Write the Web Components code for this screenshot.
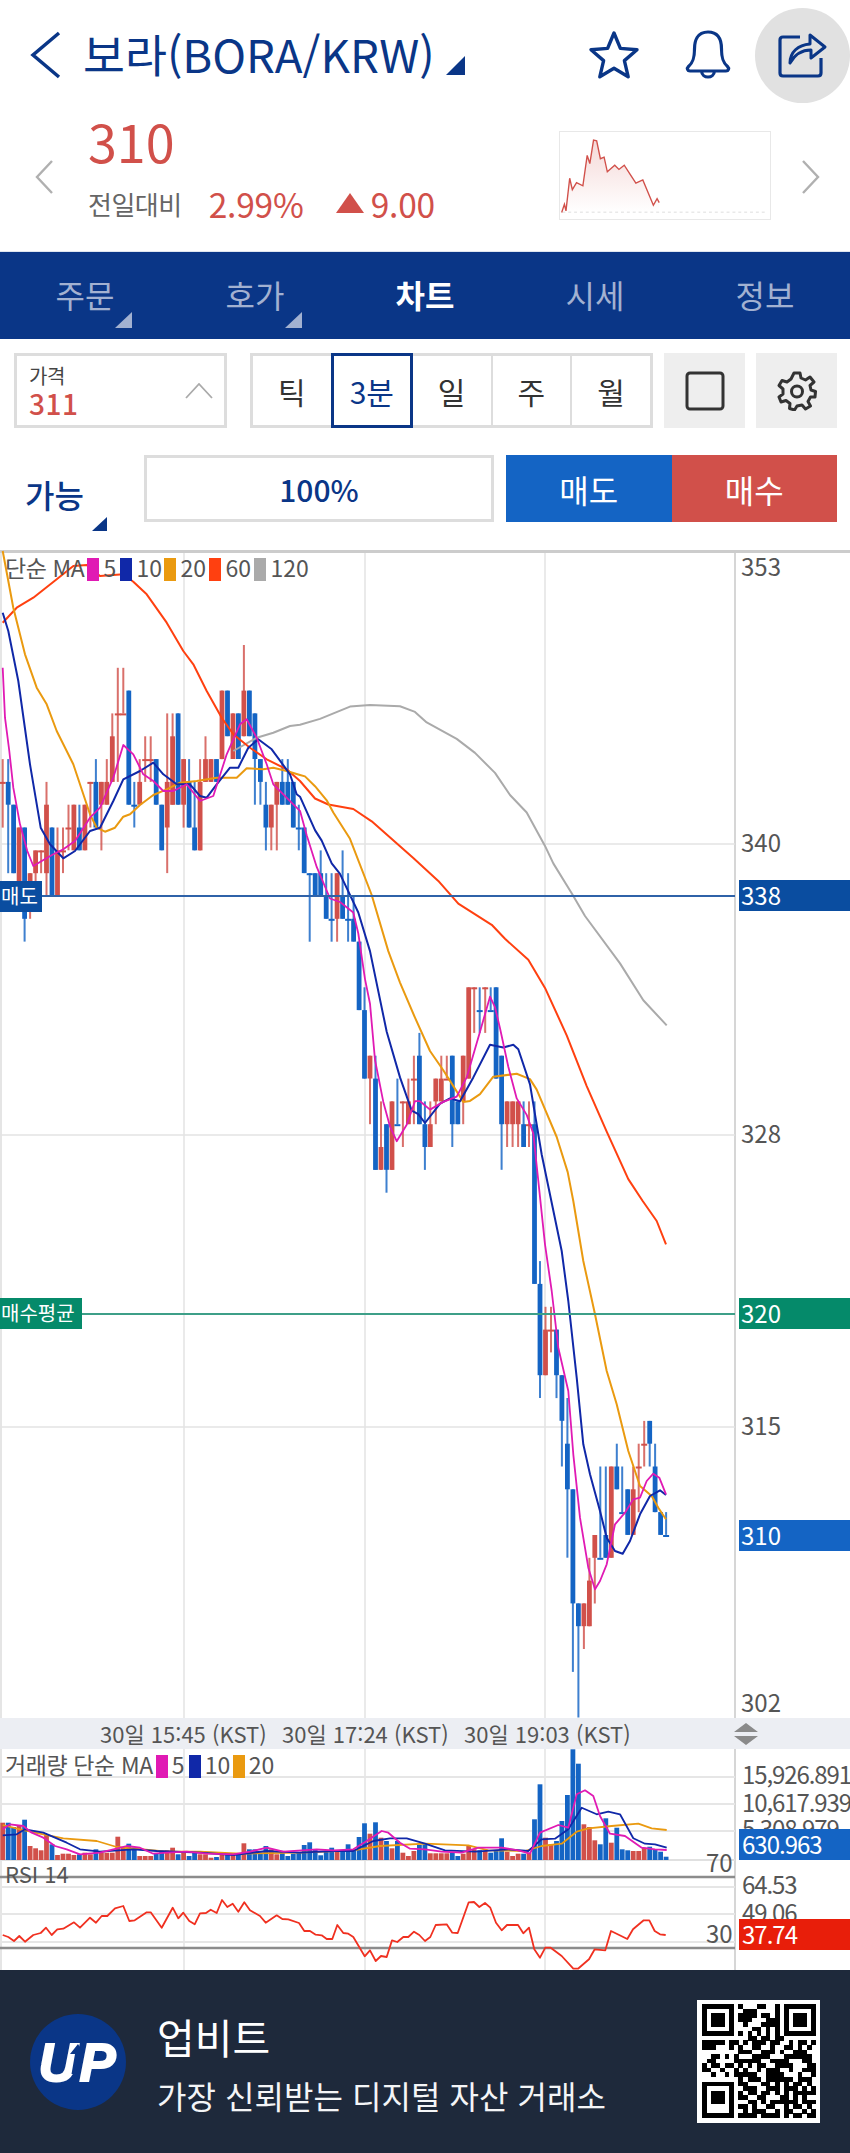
<!DOCTYPE html>
<html lang="ko">
<head>
<meta charset="utf-8">
<title>보라(BORA/KRW)</title>
<style>
	html, body { margin: 0; padding: 0; background: #fff; }
	body { width: 850px; height: 2153px; overflow: hidden; font-family: "Noto Sans CJK KR", "Noto Sans", sans-serif; }
	coin-page { display: block; }
</style>
</head>
<body>
<coin-page>
	<coin-header title-text="보라(BORA/KRW)"></coin-header>
	<price-summary></price-summary>
	<tab-bar></tab-bar>
	<chart-controls></chart-controls>
	<order-row></order-row>
	<main-chart></main-chart>
	<time-bar></time-bar>
	<lower-chart></lower-chart>
	<ad-banner></ad-banner>
</coin-page>

<script>
const NAVY = '#0a3687';
const BLUE = '#1464c4';
const RED = '#d1504a';
const MA_COLORS = { m5: '#e01ab4', m10: '#1028a8', m20: '#ea9a10', m60: '#ff4010', m120: '#aaaaaa' };

class CoinPage extends HTMLElement {
	constructor() {
		super();
		this.attachShadow({ mode: 'open' });
		this.shadowRoot.innerHTML = `
		<style>:host { display: flex; flex-direction: column; width: 850px; height: 2153px; color: #333; }</style>
		<slot></slot>`;
	}
}

class CoinHeader extends HTMLElement {
	constructor() {
		super();
		this.attachShadow({ mode: 'open' });
		this.shadowRoot.innerHTML = `
		<style>
			:host { display: flex; align-items: center; height: 110px; flex: none; padding-left: 30px; box-sizing: border-box; overflow: hidden; }
			.title { margin-left: 21px; font-size: 45.6px; line-height: 1; color: ${NAVY}; white-space: nowrap; position: relative; top: -1px; }
			.tri { width: 0; height: 0; margin: 21px 0 0 11px; border-left: 19px solid transparent; border-bottom: 19px solid ${NAVY}; }
			.icons { display: flex; align-items: center; margin-left: auto; }
			.star { margin-right: 45px; }
			.bell { margin-right: 24px; }
			.share { width: 95px; height: 95px; border-radius: 50%; background: #e1e1e1; display: flex; align-items: center; justify-content: center; }
		</style>
		<svg width="32" height="48" viewBox="0 0 32 48"><path d="M29 2 L3 24 L29 46" fill="none" stroke="${NAVY}" stroke-width="3.5"/></svg>
		<div class="title"></div>
		<div class="tri"></div>
		<div class="icons">
			<svg class="star" width="52" height="50" viewBox="0 0 52 50"><path d="M26 3 L32.4 18.4 L49 19.7 L36.4 30.6 L40.2 46.8 L26 38.2 L11.8 46.8 L15.6 30.6 L3 19.7 L19.6 18.4 Z" fill="none" stroke="${NAVY}" stroke-width="3.4" stroke-linejoin="round"/></svg>
			<svg class="bell" width="46" height="50" viewBox="0 0 46 50"><path d="M23 2 C12 2 9.5 11 9.5 19 C9.5 29 7.5 33 3.5 36.5 C1.5 38.5 2.5 41 5 41 L41 41 C43.5 41 44.5 38.5 42.5 36.5 C38.500 33 36.5 29 36.5 19 C36.5 11 34 2 23 2 Z M16.5 41 C17 49 29 49 29.500 41" fill="none" stroke="${NAVY}" stroke-width="3.2" stroke-linejoin="round"/></svg>
			<div class="share">
				<svg width="50" height="46" viewBox="0 0 50 46"><path d="M22 5 L5 5 Q2 5 2 8 L2 41 Q2 44 5 44 L40 44 Q43 44 43 41 L43 26" fill="none" stroke="${NAVY}" stroke-width="3.2"/><path d="M12 31 C12 20 20 13 32 12 L32 3 L47 15 L33 26 L33 18 C24 18 17 22 12 31 Z" fill="none" stroke="${NAVY}" stroke-width="3" stroke-linejoin="round"/></svg>
			</div>
		</div>`;
		this.shadowRoot.querySelector('.title').textContent = this.getAttribute('title-text');
	}
}

class PriceSummary extends HTMLElement {
	constructor() {
		super();
		this.attachShadow({ mode: 'open' });
		this.shadowRoot.innerHTML = `
		<style>
			:host { display: flex; align-items: flex-start; height: 142px; flex: none; box-sizing: border-box; padding: 0 30px 0 35px; border-bottom: 1px solid #dfe6ef; }
			.nav { margin-top: 50px; flex: none; }
			.info { margin-left: 35px; width: 472px; }
			.price { font-size: 52px; line-height: 52px; margin-top: 5px; color: ${RED}; }
			.diff { display: flex; align-items: center; margin-top: 17px; height: 38px; color: ${RED}; font-size: 33.5px; letter-spacing: -.2px; white-space: nowrap; }
			.label { color: #666; font-size: 26px; margin-right: 27px; letter-spacing: -.5px; }
			.up { width: 0; height: 0; border-left: 14px solid transparent; border-right: 14px solid transparent; border-bottom: 20px solid ${RED}; margin: 0 7px 0 32px; }
			.spark { width: 212px; height: 89px; margin-top: 21px; flex: none; box-sizing: border-box; border: 1px solid #e8e8e8; display: block; }
			.next { margin-left: 31px; }
		</style>
		<svg class="nav" width="18" height="34" viewBox="0 0 18 34"><path d="M17 1 L2 17 L17 33" fill="none" stroke="#b0b0b0" stroke-width="2.4"/></svg>
		<div class="info">
			<div class="price">310</div>
			<div class="diff"><span class="label">전일대비</span><span>2.99%</span><span class="up"></span><span>9.00</span></div>
		</div>
		<svg class="spark" viewBox="559 131 212 89">
			<defs><linearGradient id="sg" x1="0" y1="0" x2="0" y2="1"><stop offset="0" stop-color="${RED}" stop-opacity=".22"/><stop offset="1" stop-color="${RED}" stop-opacity="0"/></linearGradient></defs>
			<path id="sa" fill="url(#sg)"/>
			<line x1="560" x2="770" y1="213" y2="213" stroke="#ddd" stroke-dasharray="3 3"/>
			<path id="sl" fill="none" stroke="${RED}" stroke-width="1.4"/>
		</svg>
		<svg class="nav next" width="18" height="34" viewBox="0 0 18 34"><path d="M1 1 L16 17 L1 33" fill="none" stroke="#b0b0b0" stroke-width="2.4"/></svg>`;
		const raw = [[1032, 640], [1037, 615], [1040, 635], [1047, 535], [1052, 570], [1060, 548], [1072, 558], [1080, 465], [1085, 490], [1092, 418], [1098, 420], [1105, 475], [1112, 470], [1118, 515], [1132, 495], [1140, 508], [1150, 495], [1160, 520], [1172, 550], [1185, 540], [1205, 618], [1212, 598], [1216, 610]];
		const pts = raw.map(p => [(p[0] / 1.845).toFixed(1), (p[1] / 3).toFixed(1)]);
		const line = 'M' + pts.map(p => p.join(' ')).join(' L');
		this.shadowRoot.getElementById('sl').setAttribute('d', line);
		this.shadowRoot.getElementById('sa').setAttribute('d', line + ` L${pts[pts.length - 1][0]} 213 L${pts[0][0]} 213 Z`);
	}
}

class TabBar extends HTMLElement {
	constructor() {
		super();
		this.attachShadow({ mode: 'open' });
		const tabs = [['주문', 1], ['호가', 1], ['차트', 0, 1], ['시세', 0], ['정보', 0]];
		this.shadowRoot.innerHTML = `
		<style>
			:host { display: grid; grid-template-columns: repeat(5, 1fr); height: 87px; flex: none; background: ${NAVY}; }
			.tab { position: relative; display: flex; align-items: center; justify-content: center; font-size: 32px; color: #a2b1d1; padding-bottom: 3px; box-sizing: border-box; }
			.on { color: #fff; font-weight: 700; }
			.tab i { position: absolute; left: 115px; top: 60px; width: 0; height: 0; border-left: 17px solid transparent; border-bottom: 16px solid #a2b1d1; }
		</style>
		${tabs.map(t => `<div class="tab ${t[2] ? 'on' : ''}">${t[0]}${t[1] ? '<i></i>' : ''}</div>`).join('')}`;
	}
}

class ChartControls extends HTMLElement {
	constructor() {
		super();
		this.attachShadow({ mode: 'open' });
		this.shadowRoot.innerHTML = `
		<style>
			:host { display: flex; height: 101px; flex: none; box-sizing: border-box; padding: 14px 13px 12px 14px; }
			.price { width: 213px; box-sizing: border-box; border: 3px solid #ddd; display: flex; align-items: center; justify-content: space-between; padding: 0 11px 0 12px; }
			.k { font-size: 20px; line-height: 24px; color: #444; letter-spacing: -.5px; }
			.v { font-size: 28px; line-height: 30px; color: ${RED}; font-weight: 500; letter-spacing: .5px; }
			.seg { display: flex; width: 403px; margin-left: 23px; box-sizing: border-box; border: 3px solid #ddd; }
			.seg div { flex: 1; display: flex; align-items: center; justify-content: center; font-size: 30px; color: #333; border-left: 2px solid #ddd; }
			.seg div:first-child { border-left: 0; }
			.seg .on { color: ${NAVY}; box-shadow: 0 0 0 3px ${NAVY} inset; margin: -3px 0; border-left: 0; flex: 0 0 82px; }
			.on + div { border-left: 0 !important; }
			.btn { width: 81px; background: #eee; margin-left: 11px; display: flex; align-items: center; justify-content: center; }
		</style>
		<div class="price">
			<div><div class="k">가격</div><div class="v">311</div></div>
			<svg width="28" height="16" viewBox="0 0 28 16"><path d="M1 15 L14 1 L27 15" fill="none" stroke="#aaa" stroke-width="1.8"/></svg>
		</div>
		<div class="seg"><div>틱</div><div class="on">3분</div><div>일</div><div>주</div><div>월</div></div>
		<div class="btn"><svg width="40" height="40" viewBox="0 0 40 40"><rect x="2" y="2" width="36" height="36" rx="3" fill="none" stroke="#333" stroke-width="3"/></svg></div>
		<div class="btn"><svg width="40" height="40" viewBox="0 0 40 40"><path d="M17 2 L23 2 L24 7 L28.500 9 L33 6 L37 11 L33 14.500 L34 19 L38.500 20.500 L38 26 L33.500 26 L31 30.500 L33.500 35 L28.500 38 L25 34 L20 35 L17.500 39 L12.500 37.500 L13 32.500 L9 29.500 L4 31 L2 26 L6 23 L6 18 L2 14.500 L5 9.500 L10 11 L14 8 Z" fill="none" stroke="#333" stroke-width="3" stroke-linejoin="round"/><circle cx="20" cy="20.500" r="5.500" fill="none" stroke="#333" stroke-width="3"/></svg></div>`;
	}
}

class OrderRow extends HTMLElement {
	constructor() {
		super();
		this.attachShadow({ mode: 'open' });
		this.shadowRoot.innerHTML = `
		<style>
			:host { display: flex; height: 110px; flex: none; box-sizing: border-box; padding: 15px 13px 28px 25px; color: ${NAVY}; }
			.able { width: 119px; position: relative; font-size: 32px; font-weight: 500; line-height: 78px; }
			.able i { position: absolute; left: 67px; top: 62px; width: 0; height: 0; border-left: 15px solid transparent; border-bottom: 14px solid ${NAVY}; }
			.pct { width: 350px; box-sizing: border-box; border: 3px solid #ddd; display: flex; align-items: center; justify-content: center; font-size: 30px; font-weight: 500; }
			.act { display: flex; align-items: center; justify-content: center; width: 165.500px; color: #fff; font-size: 32px; }
			.sell { margin-left: 12px; background: ${BLUE}; }
			.buy { background: ${RED}; }
		</style>
		<div class="able">가능<i></i></div>
		<div class="pct">100%</div>
		<div class="act sell">매도</div>
		<div class="act buy">매수</div>`;
	}
}

class ChartLegend extends HTMLElement {
	constructor() {
		super();
		this.attachShadow({ mode: 'open' });
		const items = this.getAttribute('items').split(',').map(s => s.split(':'));
		this.shadowRoot.innerHTML = `
		<style>
			:host { display: flex; align-items: center; font-size: 23px; line-height: 24px; color: #555; white-space: nowrap; height: 24px; }
			.n { margin-right: 3px; position: relative; top: -2px; letter-spacing: -.4px; }
			i { flex: none; width: 12px; height: 23px; }
			span { margin-left: 4px; position: relative; top: -2px; }
		</style>
		<div class="n">${this.getAttribute('label')}</div>
		${items.map(i => `<i style="background:${i[1]}"></i><span style="width:${i[2]}px">${i[0]}</span>`).join('')}`;
	}
}

// price to pixel, 1 tick = 22.82px, 338 sits on the sell line
const priceY = p => 895 + 22.82 * (338 - p);
const candleX = i => 2.67 + 5.483 * i;
const B = 1, R = 0;
// [colour, body top, body bottom, wick top, wick bottom]
const CANDLES = [
	[R,343,343,344,341],[B,343,342,344,339],[B,342,339,342,339],[R,341,338,341,338],[B,341,337,341,336],[R,339,338,339,337],[R,340,339,340,338],[R,340,340,340,339],
	[R,342,339,343,338],[B,341,338,341,338],[R,340,338,341,338],[R,340,340,341,339],[R,341,341,342,340],[R,342,340,342,340],[B,341,340,342,340],[R,342,340,342,340],
	[R,343,343,343,341],[B,343,341,344,341],[R,343,342,343,340],[R,343,342,344,342],[R,345,343,346,343],[R,346,346,348,343],[R,346,346,348,346],[B,347,342,347,342],
	[B,342,342,343,341],[R,343,342,344,342],[R,344,344,345,343],[R,344,344,345,343],[B,344,342,344,342],[B,342,340,342,340],[R,343,341,346,339],[R,345,342,346,342],
	[B,346,342,346,342],[R,344,342,344,341],[B,343,341,344,341],[B,341,340,343,340],[R,343,340,344,340],[R,344,343,345,343],[R,344,343,344,343],[B,344,343,344,343],
	[R,347,344,347,344],[B,347,345,347,345],[R,346,344,346,344],[B,346,344,346,344],[R,347,345,349,345],[B,347,345,347,345],[B,346,344,346,342],[B,344,343,344,342],
	[B,342,341,343,340],[R,342,341,342,340],[R,343,342,343,340],[B,343,342,344,342],[B,343,342,344,342],[B,343,341,343,341],[B,341,341,342,340],[B,341,339,341,339],
	[B,339,339,339,336],[B,339,338,339,338],[B,339,338,340,338],[B,338,337,339,337],[B,337,337,339,336],[R,339,337,339,336],[B,338,337,340,337],[B,337,337,339,336],
	[B,337,336,338,336],[B,336,333,336,333],[B,333,330,334,330],[R,331,330,331,328],[B,330,326,331,326],[R,327,326,329,326],[B,328,326,328,325],[R,329,326,329,326],
	[B,328,328,330,328],[R,329,329,329,327],[R,329,328,330,328],[R,330,330,331,328],[B,331,328,332,328],[B,328,327,329,326],[R,328,327,329,327],[R,330,329,330,328],
	[R,330,329,331,329],[R,330,330,331,330],[B,331,328,331,327],[B,329,328,329,328],[R,331,329,331,328],[R,334,330,334,330],[R,334,334,334,332],[B,333,333,334,332],
	[R,334,334,334,332],[B,333,333,334,333],[B,334,330,334,330],[B,331,328,331,326],[R,329,328,329,327],[R,329,328,329,327],[R,329,328,329,327],[B,328,327,329,327],
	[R,328,328,329,327],[B,328,321,329,321],[B,321,317,322,316],[R,319,317,320,317],[R,319,319,320,318],[B,319,317,319,316],[B,317,315,317,313],[B,314,312,316,309],
	[B,312,307,312,304],[B,307,306,307,302],[R,307,306,307,305],[R,308,306,309,306],[R,310,309,310,307],[B,309,309,313,309],[B,310,309,313,309],[R,313,309,313,309],
	[B,313,312,314,312],[B,311,311,313,311],[B,312,310,312,310],[R,312,310,313,310],[R,313,313,314,311],[R,314,314,315,313],[B,315,314,315,313],[B,313,311,314,311],
	[B,311,310,311,310],[B,310,310,311,310]
];

const z3 = a => a.map(p => [p[0] / 3, 550 + p[1] / 3]);
const z4 = a => a.map(p => [300 + p[0] / 3, 680 + p[1] / 2.851]);
const z5 = a => a.map(p => [500 + p[0] / 3, 1200 + p[1] / 3]);
const lowL = a => a.map(p => [p[0] / 3, 1700 + p[1] / 3]);
const lowR = a => a.map(p => [425 + p[0] / 3, 1700 + p[1] / 3]);
const polyline = (pts, color, w) => `<polyline fill="none" stroke="${color}" stroke-width="${w}" stroke-linejoin="round" points="${pts.map(p => p[0].toFixed(1) + ',' + p[1].toFixed(1)).join(' ')}"/>`;

const MA5 = [...z3([[8,350],[15,500],[28,600],[40,710],[60,820],[82,900],[100,945],[125,930],[160,910],[190,895],[225,870],[270,800],[300,770],[340,680],[370,582],[400,610],[430,670],[460,690],[490,720],[520,720],[560,700],[600,750],[640,735],[680,610],[720,520],[740,505],[770,560],[800,640],[820,700],[850,730],[880,760]]),
	...z4([[0,370],[20,440],[50,530],[90,620],[120,630],[160,660],[175,720],[195,850],[210,920],[225,1080],[250,1200],[270,1270],[290,1312],[320,1265],[345,1198],[360,1198],[390,1222],[430,1200],[470,1185],[500,1130],[540,1000],[570,900],[585,930],[600,990],[625,1100],[650,1190],[680,1237],[700,1290]]),
	...z5([[135,130],[155,270],[175,440],[205,570],[220,760],[240,950],[265,1100],[285,1165],[300,1140],[320,1090],[345,970],[375,935],[400,895],[420,890],[440,840],[460,818],[478,830],[498,880]])];
const MA10 = [...z3([[8,185],[25,240],[55,390],[90,640],[122,830],[150,880],[190,922],[225,900],[270,840],[300,830],[340,750],[370,685],[420,660],[460,635],[490,670],[530,700],[570,700],[600,735],[620,740],[650,700],[690,650],[715,650],[745,590],[775,565],[815,595],[870,670],[890,730]]),
	...z4([[0,330],[45,425],[65,455],[95,520],[120,550],[175,660],[210,770],[260,1000],[300,1130],[335,1225],[355,1235],[375,1260],[420,1205],[450,1190],[480,1198],[520,1130],[570,1037],[610,1045],[640,1037],[655,1050],[690,1150],[725,1350]]),
	...z5([[185,150],[205,300],[230,530],[250,730],[270,820],[300,930],[320,1010],[345,1050],[368,1058],[390,1020],[420,940],[450,885],[480,868],[498,882]])];
const MA20 = [...z3([[8,0],[40,170],[75,310],[110,410],[140,460],[170,540],[220,640],[270,790],[290,830],[315,842],[345,830],[370,797],[390,790],[420,762],[460,732],[500,715],[540,695],[590,690],[650,680],[710,680],[740,652],[790,655],[820,650],[860,660]]),
	...z4([[0,268],[15,272],[45,300],[80,340],[100,375],[150,450],[215,610],[265,770],[300,860],[345,960],[390,1055],[430,1110],[490,1200],[510,1197],[540,1178],[580,1128],[650,1120],[690,1135],[710,1165],[770,1300],[803,1400]]),
	...z5([[220,0],[250,180],[285,340],[320,510],[350,610],[385,750],[420,855],[455,885],[475,920],[498,955]])];
const MA60 = [...z3([[8,215],[50,170],[100,140],[170,85],[220,45],[260,42],[300,75],[370,70],[400,92],[440,130],[500,215],[550,300],[580,340],[620,420],[665,500],[700,550],[750,590],[800,625],[860,655]]),
	...z4([[0,285],[45,335],[85,352],[160,365],[215,400],[340,505],[415,570],[475,635],[575,695],[615,735],[685,795],[735,875],[800,1010],[860,1155],[920,1285],[985,1420]]),
	...z5([[428,0],[470,60],[498,130]])];
const MA120 = [...z3([[700,600],[770,560],[820,545],[870,525]]),
	...z4([[0,125],[60,108],[150,73],[210,68],[300,72],[345,88],[380,118],[470,165],[525,205],[585,262],[630,325],[680,375],[735,470],[760,520],[815,605],[855,670],[960,805],[1030,910],[1100,982]])];

class MainChart extends HTMLElement {
	constructor() {
		super();
		this.attachShadow({ mode: 'open' });
		const rects = CANDLES.map((c, i) => {
			const x = candleX(i);
			const col = c[0] ? BLUE : RED;
			const top = priceY(c[1]);
			const h = Math.max(priceY(c[2]) - top, 2);
			const doji = c[1] === c[2];
			return `<rect x="${(x - 1).toFixed(1)}" y="${priceY(c[3]).toFixed(1)}" width="2" height="${(priceY(c[4]) - priceY(c[3])).toFixed(1)}" fill="${col}" opacity=".82"/>` +
				`<rect x="${(x - (doji ? 3 : 2.4)).toFixed(1)}" y="${top.toFixed(1)}" width="${doji ? 6 : 4.8}" height="${h.toFixed(1)}" fill="${col}"/>`;
		}).join('');
		const grid = [184, 365, 545].map(x => `<line x1="${x}" x2="${x}" y1="552" y2="1717" stroke="#e3e3e3" stroke-width="1.500"/>`).join('') +
			[843, 1134, 1426].map(y => `<line x1="0" x2="735" y1="${y}" y2="${y}" stroke="#e3e3e3" stroke-width="1.500"/>`).join('');
		const axis = [['353', 565], ['340', 841], ['328', 1132], ['315', 1424], ['302', 1701]];
		this.shadowRoot.innerHTML = `
		<style>
			:host { display: block; position: relative; height: 1168px; flex: none; overflow: hidden; }
			svg { display: block; }
			.a { position: absolute; left: 741px; font-size: 24px; line-height: 30px; height: 30px; color: #555; }
			.tag { position: absolute; height: 31px; line-height: 29px; color: #fff; box-sizing: border-box; white-space: nowrap; }
			.l { left: 0; font-size: 20px; padding: 0 1px; }
			.r { left: 739px; width: 111px; font-size: 24px; padding-left: 2px; }
			chart-legend { position: absolute; left: 5px; top: 7px; }
		</style>
		<svg width="850" height="1168" viewBox="0 549 850 1168">
			<rect x="0" y="549" width="850" height="3" fill="#ccc"/>
			<line x1="1" x2="1" y1="552" y2="1717" stroke="#ddd" stroke-width="1.500"/>
			<line x1="735" x2="735" y1="552" y2="1717" stroke="#c8c8c8" stroke-width="1.500"/>
			${grid}
			${rects}
			${polyline(MA120, MA_COLORS.m120, 2)}
			${polyline(MA60, MA_COLORS.m60, 2)}
			${polyline(MA20, MA_COLORS.m20, 2)}
			${polyline(MA10, MA_COLORS.m10, 2)}
			${polyline(MA5, MA_COLORS.m5, 1.8)}
			<line x1="0" x2="735" y1="895" y2="895" stroke="#2f62a8" stroke-width="1.800"/>
			<line x1="0" x2="735" y1="1313" y2="1313" stroke="#3d9f88" stroke-width="1.800"/>
		</svg>
		<chart-legend label="단순 MA" items="5:${MA_COLORS.m5}:17,10:${MA_COLORS.m10}:28,20:${MA_COLORS.m20}:29,60:${MA_COLORS.m60}:29,120:${MA_COLORS.m120}:40"></chart-legend>
		${axis.map(a => `<div class="a" style="top:${a[1] - 549 - 15}px">${a[0]}</div>`).join('')}
		<div class="tag l" style="top:${880 - 549}px;background:#0a4da0;width:42px">매도</div>
		<div class="tag r" style="top:${879 - 549}px;background:#0a4da0">338</div>
		<div class="tag l" style="top:${1297 - 549}px;background:#058a6a;width:82px">매수평균</div>
		<div class="tag r" style="top:${1297 - 549}px;background:#058a6a">320</div>
		<div class="tag r" style="top:${1519 - 549}px;background:${BLUE}">310</div>`;
	}
}

class TimeBar extends HTMLElement {
	constructor() {
		super();
		this.attachShadow({ mode: 'open' });
		this.shadowRoot.innerHTML = `
		<style>
			:host { display: flex; align-items: center; height: 31px; flex: none; background: #eceef3; padding-left: 100px; box-sizing: border-box; font-size: 22px; color: #555; white-space: nowrap; }
			span { width: 182px; position: relative; top: -1px; }
			svg { margin-left: 103px; }
		</style>
		<span>30일 15:45 (KST)</span><span>30일 17:24 (KST)</span><span style="width:auto">30일 19:03 (KST)</span>
		<svg width="24" height="24" viewBox="0 0 24 24"><path d="M12 1 L24 10 L0 10 Z M0 14 L24 14 L12 23 Z" fill="#8a8a8a"/></svg>`;
	}
}

const VOL_TOPS = [365,365,378,372,356,435,442,448,400,430,462,458,458,462,460,455,460,445,455,455,455,407,440,428,440,465,465,465,458,452,448,440,460,455,465,450,460,460,470,468,462,460,462,462,427,445,445,455,435,445,460,455,465,458,455,432,424,445,463,450,440,450,450,430,445,408,367,398,364,410,420,442,420,455,465,450,432,430,
	457,457,457,457,455,465,458,432,445,448,450,455,450,412,452,465,458,458,455,355,250,410,430,420,360,282,145,188,370,378,418,430,352,425,380,445,448,450,450,440,437,445,452,467];
const VOL5 = [...lowL([[8,385],[30,370],[70,375],[95,395],[130,410],[165,435],[200,445],[240,460],[300,455],[340,445],[380,435],[420,440],[460,458],[500,455],[560,452],[620,458],[700,460],[750,452],[800,440],[850,452],[950,445],[1000,448],[1060,445],[1100,420],[1145,390],[1165,395],[1200,425],[1230,443],[1275,445]]),
	...lowR([[50,452],[110,455],[160,440],[230,440],[280,448],[315,458],[345,395],[400,372],[430,380],[455,280],[480,268],[505,285],[525,345],[555,398],[600,405],[650,440],[690,445],[725,447]])];
const VOL10 = [...lowL([[8,403],[50,400],[75,385],[130,395],[200,425],[240,445],[300,452],[400,445],[470,450],[600,455],[700,462],[800,450],[900,455],[1000,450],[1060,450],[1120,420],[1170,412],[1220,412],[1275,428]]),
	...lowR([[60,448],[150,452],[250,445],[310,450],[350,415],[390,413],[430,385],[470,320],[515,340],[550,332],[585,340],[625,412],[660,428],[690,430],[725,440]])];
const VOL20 = [...lowL([[8,372],[60,385],[130,400],[190,412],[290,420],[350,438],[430,445],[500,452],[600,452],[720,458],[900,455],[1060,448],[1140,435],[1275,428]]),
	...lowR([[130,433],[190,448],[300,450],[350,435],[410,428],[455,392],[490,382],[560,375],[640,368],[680,382],[725,387]])];
const RSI = [...lowL([[8,702],[25,708],[42,720],[58,705],[75,722],[100,702],[122,696],[138,680],[155,702],[172,685],[190,683],[222,664],[240,680],[270,650],[288,665],[305,645],[322,645],[345,622],[370,615],[388,660],[404,658],[440,634],[452,634],[485,680],[518,620],[535,652],[550,635],[568,660],[584,670],[600,637],[618,636],[632,626],[650,636],[666,597],[682,618],[698,608],[715,632],[733,604],[750,628],[780,645],[797,665],[830,643],[847,654],[865,655],[897,666],[913,690],[930,690],[947,701],[965,703],[980,714],[997,714],[1012,672],[1030,696],[1045,698],[1060,708],[1094,766],[1110,748],[1127,780],[1143,765],[1160,768],[1176,718],[1192,723],[1210,708],[1225,708],[1242,692],[1258,702],[1275,720]]),
	...lowR([[16,708],[32,672],[65,670],[82,695],[98,696],[131,604],[147,603],[163,618],[180,606],[196,620],[213,665],[230,688],[246,672],[279,672],[295,697],[312,680],[328,745],[345,770],[361,740],[377,740],[410,765],[445,803],[459,803],[492,775],[509,745],[541,748],[558,690],[607,714],[624,685],[656,658],[673,658],[689,690],[705,700],[722,702]])];

class LowerChart extends HTMLElement {
	constructor() {
		super();
		this.attachShadow({ mode: 'open' });
		const bars = VOL_TOPS.map((t, i) => {
			const top = 1700 + t / 3;
			return `<rect x="${(candleX(i) - 2.4).toFixed(1)}" y="${top.toFixed(1)}" width="4.800" height="${(1859 - top).toFixed(1)}" fill="${CANDLES[i][0] ? BLUE : RED}"/>`;
		}).join('');
		const h = (y, c, w) => `<line x1="0" x2="735" y1="${y}" y2="${y}" stroke="${c}" stroke-width="${w}"/>`;
		const labels = [['15,926.891', 1773], ['10,617.939', 1801], ['5,308.979', 1827], ['64.53', 1883], ['49.06', 1911]];
		this.shadowRoot.innerHTML = `
		<style>
			:host { display: block; position: relative; height: 221px; flex: none; overflow: hidden; }
			svg { display: block; }
			.a { position: absolute; left: 742px; font-size: 24px; line-height: 30px; color: #555; white-space: nowrap; letter-spacing: -1.1px; }
			.n { position: absolute; left: 706px; font-size: 24px; line-height: 30px; color: #555; }
			.tag { position: absolute; left: 739px; width: 111px; height: 31px; line-height: 29px; font-size: 24px; color: #fff; padding-left: 3px; box-sizing: border-box; letter-spacing: -1px; }
			chart-legend { position: absolute; left: 5px; top: 5px; }
			.rsi { position: absolute; left: 5px; top: 109px; font-size: 22px; line-height: 30px; color: #555; }
		</style>
		<svg width="850" height="221" viewBox="0 1748 850 221">
			<line x1="1" x2="1" y1="1748" y2="1969" stroke="#ddd" stroke-width="1.500"/>
			<line x1="735" x2="735" y1="1748" y2="1969" stroke="#c8c8c8" stroke-width="1.500"/>
			${[184, 365, 545].map(x => `<line x1="${x}" x2="${x}" y1="1748" y2="1969" stroke="#e3e3e3" stroke-width="1.500"/>`).join('')}
			${h(1776, '#e6e6e6', 2)}${h(1803, '#e6e6e6', 2)}${h(1830, '#e6e6e6', 2)}${h(1859, '#e0e0e0', 2)}
			${h(1886, '#e6e6e6', 2)}${h(1913, '#e6e6e6', 2)}${h(1941, '#e6e6e6', 2)}
			${bars}
			${polyline(VOL20, MA_COLORS.m20, 1.8)}
			${polyline(VOL10, MA_COLORS.m10, 1.8)}
			${polyline(VOL5, MA_COLORS.m5, 1.8)}
			${h(1876, '#8c8c8c', 2.5)}${h(1947, '#8c8c8c', 2.5)}
			${polyline(RSI, '#f03020', 1.8)}
		</svg>
		<chart-legend label="거래량 단순 MA" items="5:${MA_COLORS.m5}:17,10:${MA_COLORS.m10}:28,20:#ea9a10:30"></chart-legend>
		<div class="rsi">RSI 14</div>
		${labels.map(l => `<div class="a" style="top:${l[1] - 1748 - 15}px">${l[0]}</div>`).join('')}
		<div class="n" style="top:${1861 - 1748 - 15}px">70</div>
		<div class="n" style="top:${1932 - 1748 - 15}px">30</div>
		<div class="tag" style="top:${1828 - 1748}px;background:${BLUE}">630.963</div>
		<div class="tag" style="top:${1918 - 1748}px;background:#e81e0a">37.74</div>`;
	}
}

const QR = [
	'1111111010001100101111111',
	'1000001001110000101000001',
	'1011101011110110101011101',
	'1011101011100011101011101',
	'1011101001000111101011101',
	'1000001000011010101000001',
	'1111111010101010101111111',
	'0000000000110110110000000',
	'1111101101011101100101101',
	'1110001010011001001101010',
	'0000000011100111010011100',
	'0011010100011110001111110',
	'0110000111111001111000110',
	'1011011010101100111100011',
	'1100100101001011100100111',
	'0010010111110011110001001',
	'0000000010111011111101110',
	'1111111011000110101011010',
	'1000001001110011101110101',
	'1011101010110110101011111',
	'1011101011001100011010100',
	'1011101000110101111110111',
	'1000001011010011001011010',
	'1000001001011100101100101',
	'1111111011110111101011011'
];

class AdBanner extends HTMLElement {
	constructor() {
		super();
		this.attachShadow({ mode: 'open' });
		const cells = QR.map((row, y) => row.split('').map((v, x) => v === '1' ? `<rect x="${x}" y="${y}" width="1.02" height="1.02"/>` : '').join('')).join('');
		this.shadowRoot.innerHTML = `
		<style>
			:host { display: flex; align-items: center; height: 184px; flex: none; box-sizing: border-box; background: #1e293b; color: #fff; padding: 0 30px 0 30px; }
			.logo { flex: none; position: relative; width: 96px; height: 96px; margin-top: -1px; border-radius: 50%; background: ${NAVY}; display: flex; align-items: center; justify-content: center; }
			.up { font-family: "Liberation Sans", sans-serif; font-style: italic; font-weight: 700; font-size: 54px; letter-spacing: 2px; line-height: 1; -webkit-text-stroke: 2px #fff; color: #fff; }
			.logo svg { position: absolute; left: 40px; top: 30px; }
			.txt { margin-left: 31px; flex: 1; }
			.t { font-size: 41px; line-height: 56px; }
			.s { font-size: 32px; line-height: 44px; margin-top: 9px; color: #f4f5f7; letter-spacing: .05px; white-space: nowrap; }
			.qr { flex: none; width: 123px; height: 123px; background: #fff; padding: 4.5px; box-sizing: border-box; margin-top: -2px; }
			.qr svg { display: block; width: 114px; height: 114px; }
		</style>
		<div class="logo"><span class="up">UP</span><svg width="14" height="30" viewBox="0 0 14 30"><path d="M8 0 L14 10 L10 10 L6 30 L1.500 30 L5 10 L0 10 Z" fill="${NAVY}"/></svg></div>
		<div class="txt"><div class="t">업비트</div><div class="s">가장 신뢰받는 디지털 자산 거래소</div></div>
		<div class="qr"><svg viewBox="0 0 25 25" shape-rendering="crispEdges">${cells}</svg></div>`;
	}
}

customElements.define('coin-page', CoinPage);
customElements.define('coin-header', CoinHeader);
customElements.define('price-summary', PriceSummary);
customElements.define('tab-bar', TabBar);
customElements.define('chart-controls', ChartControls);
customElements.define('order-row', OrderRow);
customElements.define('chart-legend', ChartLegend);
customElements.define('main-chart', MainChart);
customElements.define('time-bar', TimeBar);
customElements.define('lower-chart', LowerChart);
customElements.define('ad-banner', AdBanner);
</script>
</body>
</html>
